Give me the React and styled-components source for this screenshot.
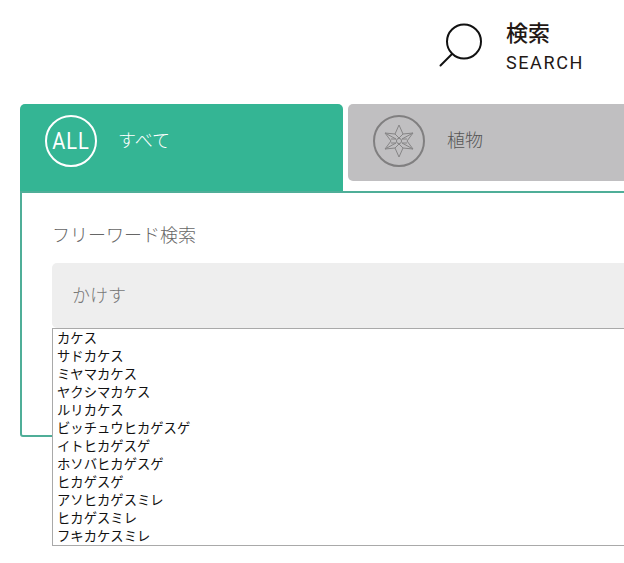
import React from 'react'
import styled, { createGlobalStyle } from 'styled-components'

const GlobalStyle = createGlobalStyle`
  html, body {
    margin: 0;
    padding: 0;
    background: #fff;
    overflow: hidden;
  }
  body {
    font-family: "Roboto", "Noto Sans CJK JP", sans-serif;
  }
`

const Page = styled.div`
  width: 624px;
  height: 563px;
  overflow: hidden;
`

const Header = styled.header`
  display: flex;
  justify-content: flex-start;
  align-items: flex-start;
  height: 104px;
  padding: 20px 0 0 439px;
  box-sizing: border-box;
`

const SearchLink = styled.div`
  display: flex;
  gap: 21px;
`

const SearchText = styled.div`
  display: flex;
  flex-direction: column;
  color: #231815;
`

const SearchTitle = styled.div`
  font: 500 22px/22px "Noto Sans CJK JP", sans-serif;
`

const SearchSub = styled.div`
  font: 400 18px/24px "Roboto", sans-serif;
  letter-spacing: 1.6px;
  margin-top: 9px;
`

const Tabs = styled.nav`
  display: flex;
  gap: 5px;
  width: 800px;
  margin-left: 20px;
  align-items: flex-start;
`

const Tab = styled.div`
  display: flex;
  align-items: center;
  gap: 22px;
  flex: none;
  box-sizing: border-box;
  width: ${p => (p.$active ? '323px' : '400px')};
  height: ${p => (p.$active ? '87px' : '77px')};
  padding: ${p => (p.$active ? '0 0 14px 25px' : '0 0 4px 25px')};
  border-radius: 5px 5px ${p => (p.$active ? '0 0' : '5px 5px')};
  background: ${p => (p.$active ? '#34b594' : '#c0bfc1')};
  color: ${p => (p.$active ? '#fff' : '#555')};
`

const Badge = styled.div`
  display: flex;
  align-items: center;
  justify-content: center;
  box-sizing: border-box;
  width: 52px;
  height: 52px;
  border-radius: 50%;
  border: 2px solid ${p => (p.$active ? '#fff' : '#807f80')};
`

const BadgeText = styled.span`
  display: block;
  font: 400 20px/1 "Roboto", sans-serif;
  letter-spacing: 1px;
  transform: scaleY(1.15);
`

const TabLabel = styled.span`
  font: 300 18px/24px "Noto Sans CJK JP", sans-serif;
  position: relative;
  top: -2px;
  left: ${p => (p.$active ? '-1px' : '0')};
`

const Panel = styled.section`
  position: relative;
  box-sizing: border-box;
  width: 800px;
  height: 246px;
  margin-left: 20px;
  padding: 29px 0 0 30px;
  border: 2px solid #4fae98;
  border-radius: 0 0 0 3px;
`

const FieldLabel = styled.div`
  font: 300 18px/24px "Noto Sans CJK JP", sans-serif;
  color: #666;
`

const Input = styled.div`
  box-sizing: border-box;
  width: 760px;
  height: 65px;
  margin-top: 17px;
  padding: 0 20px;
  border-radius: 5px;
  background: #eee;
  color: #777;
  font: 300 18px/63px "Noto Sans CJK JP", sans-serif;
`

const Suggestions = styled.ul`
  position: absolute;
  top: 135px;
  left: 30px;
  box-sizing: border-box;
  width: 760px;
  height: 218px;
  margin: 0;
  padding: 0 0 0 4px;
  list-style: none;
  background: #fff;
  border: 1px solid #a9a9a9;
  overflow: hidden;
`

const Suggestion = styled.li`
  height: 18px;
  font: 400 13.33px/17px "Noto Sans CJK JP", sans-serif;
  color: #111;
  white-space: nowrap;
`

const suggestions = [
  'カケス',
  'サドカケス',
  'ミヤマカケス',
  'ヤクシマカケス',
  'ルリカケス',
  'ビッチュウヒカゲスゲ',
  'イトヒカゲスゲ',
  'ホソバヒカゲスゲ',
  'ヒカゲスゲ',
  'アソヒカゲスミレ',
  'ヒカゲスミレ',
  'フキカケスミレ'
]

const SearchIcon = () => (
  <svg width="46" height="48" viewBox="0 0 46 48" fill="none" stroke="#111" strokeWidth="2">
    <circle cx="25" cy="21.5" r="17" />
    <path d="M13 34 L1.5 45.5" strokeLinecap="round" />
  </svg>
)

const PlantIcon = () => (
  <svg width="30" height="34" viewBox="0 0 30 34" fill="none" stroke="#868586" strokeWidth="1">
    <path d="M15 1 L19 10 L29 9 L23 17 L29 25 L19 24 L15 33 L11 24 L1 25 L7 17 L1 9 L11 10 Z" />
    <path d="M11 10 L15 14 L19 10 M11 24 L15 20 L19 24" />
    <path d="M1 9 L12 15 H7 M29 9 L18 15 H23 M1 25 L12 19 H7 M29 25 L18 19 H23" />
    <circle cx="15" cy="17" r="2.6" />
  </svg>
)

const App = () => (
  <Page>
    <GlobalStyle />
    <Header>
      <SearchLink>
        <SearchIcon />
        <SearchText>
          <SearchTitle>検索</SearchTitle>
          <SearchSub>SEARCH</SearchSub>
        </SearchText>
      </SearchLink>
    </Header>
    <Tabs>
      <Tab $active>
        <Badge $active><BadgeText>ALL</BadgeText></Badge>
        <TabLabel $active>すべて</TabLabel>
      </Tab>
      <Tab>
        <Badge><PlantIcon /></Badge>
        <TabLabel>植物</TabLabel>
      </Tab>
    </Tabs>
    <Panel>
      <FieldLabel>フリーワード検索</FieldLabel>
      <Input>かけす</Input>
      <Suggestions>
        {suggestions.map(name => <Suggestion key={name}>{name}</Suggestion>)}
      </Suggestions>
    </Panel>
  </Page>
)

export default App
